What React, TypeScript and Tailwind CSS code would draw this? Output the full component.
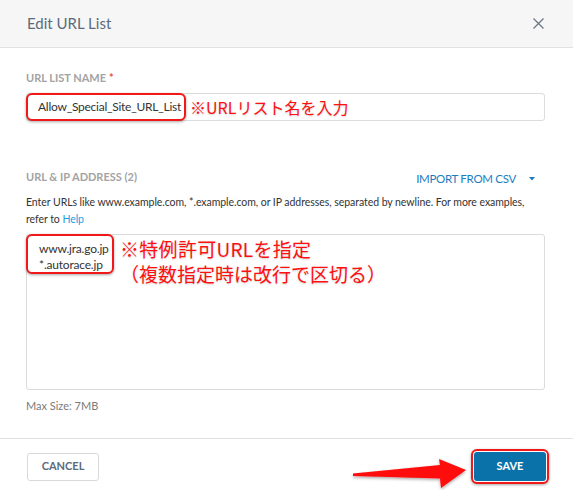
const redBox =
  "border-2 border-[#f01818] rounded-[6px] bg-white shadow-[0_1px_3px_rgba(0,0,0,0.35)]";
const note =
  "text-[#ff1010] font-['Noto_Sans_CJK_JP',sans-serif] [text-shadow:0_1px_2px_rgba(0,0,0,0.18)]";

function Arrow() {
  // annotation arrow pointing at the save button
  return (
    <svg
      className="absolute left-[340px] top-[445px]"
      width="140"
      height="45"
      viewBox="0 0 140 45"
    >
      <defs>
        <filter id="sh" x="-10%" y="-30%" width="130%" height="160%">
          <feDropShadow dx="0" dy="1.5" stdDeviation="1.5" floodOpacity="0.35" />
        </filter>
      </defs>
      <path
        d="M13 28.5 L100 20 L99 14 L126 25 L101 43 L100 33.5 L13 31 Z"
        fill="#ff0a0a"
        filter="url(#sh)"
      />
    </svg>
  );
}

export default function App() {
  return (
    <div className="relative w-[573px] h-[492px] overflow-hidden bg-white font-['Lato','Noto_Sans_CJK_JP',sans-serif]">
      <div className="h-[48px] flex items-center justify-between bg-[#f6f6f6] border-b border-[#e1e1e1] pl-[27px] pr-[29px]">
        <span className="text-[15px] text-[#5b6b7c]">Edit URL List</span>
        <svg width="11" height="11" viewBox="0 0 11 11">
          <path d="M0.5 0.5 L10.5 10.5 M10.5 0.5 L0.5 10.5" stroke="#6b7886" strokeWidth="1.3" />
        </svg>
      </div>

      <div className="pl-[26px] pr-[28px] pt-[22px] pb-[24px]">
        <div className="h-[16px] flex items-center text-[11px] font-bold text-[#a3a3a3]">
          URL LIST NAME<span className="ml-[3px] text-[#e8504b]">*</span>
        </div>
        <div className="mt-[7px] h-[28px] flex items-center border border-[#dcdcdc] rounded-[3px]">
          <div className={`-ml-px h-[28px] w-[160px] flex items-center pl-[10px] ${redBox}`}>
            <span className="text-[12px] tracking-[-0.25px] text-[#333]">Allow_Special_Site_URL_List</span>
          </div>
          <span className={`ml-[4px] text-[16px] ${note}`}>※URLリスト名を入力</span>
        </div>

        <div className="mt-[48px] h-[16px] flex items-center justify-between">
          <span className="text-[11px] font-bold text-[#a3a3a3]">URL &amp; IP ADDRESS (2)</span>
          <span className="flex items-center mt-[4px] text-[11.5px] tracking-[-0.3px] text-[#1b7dbf]">
            IMPORT FROM CSV
            <svg className="ml-[13px] mr-[10px]" width="6" height="4" viewBox="0 0 6 4">
              <path d="M0 0 H6 L3 3.5 Z" fill="#1b7dbf" />
            </svg>
          </span>
        </div>
        <p className="mt-[9px] text-[10.5px] tracking-[-0.05px] leading-[17px] text-[#333] whitespace-nowrap">
          Enter URLs like www.example.com, *.example.com, or IP addresses, separated by newline. For more examples,
          <br />
          refer to <span className="text-[#1ba1e2]">Help</span>
        </p>

        <div className="mt-[6px] h-[156px] border border-[#dcdcdc] rounded-[3px]">
          <div className="flex items-start">
            <div className={`-ml-px -mt-px w-[88px] h-[40px] pl-[11px] pt-[5px] ${redBox}`}>
              <div className="text-[12px] leading-[16px] tracking-[-0.2px] text-[#333]">www.jra.go.jp</div>
              <div className="text-[12px] leading-[16px] tracking-[-0.2px] text-[#333]">*.autorace.jp</div>
            </div>
            <div className={`ml-[6px] mt-[1px] text-[19px] leading-[25px] ${note}`}>
              <div className="tracking-[0.3px]">※特例許可URLを指定</div>
              <div>（複数指定時は改行で区切る）</div>
            </div>
          </div>
        </div>

        <div className="mt-[8px] h-[16px] flex items-center text-[11px] text-[#7a7a7a]">
          Max Size: 7MB
        </div>
      </div>

      <div className="border-t border-[#e1e1e1] flex items-center justify-between pl-[27px] pr-[24px] pt-[10px]">
        <button className="w-[72px] h-[28px] border border-[#d9d9d9] rounded-[3px] text-[11px] font-bold text-[#5b6b7c]">
          CANCEL
        </button>
        <div className={`p-px ${redBox}`}>
          <button className="w-[72px] h-[29px] bg-[#0a72a8] rounded-[3px] text-[11px] font-bold text-white">
            SAVE
          </button>
        </div>
      </div>

      <Arrow />
    </div>
  );
}
